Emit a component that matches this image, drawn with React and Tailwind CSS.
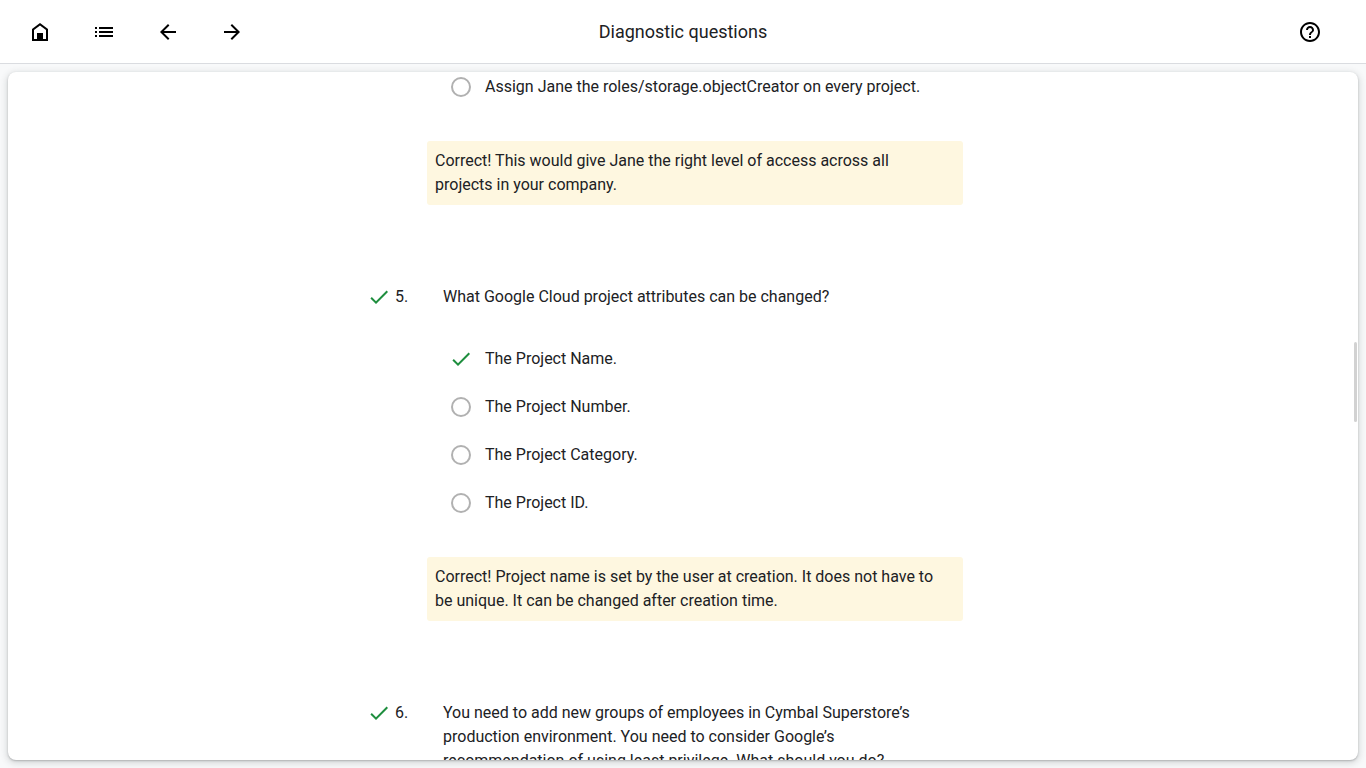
import { useId } from 'react';

const PATHS = {
  home: 'M4 21V9l8-6 8 6v12H4zM6 10v9h3v-6h6v6h3v-9l-6-4.5L6 10zM9 13h6v6H9z',
  list: 'M3 13h2v-2H3v2zm0 4h2v-2H3v2zm0-8h2V7H3v2zm4 4h14v-2H7v2zm0 4h14v-2H7v2zM7 7v2h14V7H7z',
  back: 'M20 11H7.83l5.59-5.59L12 4l-8 8 8 8 1.41-1.41L7.83 13H20v-2z',
  forward: 'M12 4l-1.41 1.41L16.17 11H4v2h12.17l-5.58 5.59L12 20l8-8-8-8z',
  help: 'M11 18h2v-2h-2v2zm1-16C6.48 2 2 6.48 2 12s4.48 10 10 10 10-4.48 10-10S17.52 2 12 2zm0 18c-4.41 0-8-3.59-8-8s3.59-8 8-8 8 3.59 8 8-3.59 8-8 8zm0-14c-2.21 0-4 1.79-4 4h2c0-1.1.9-2 2-2s2 .9 2 2c0 2-3 1.75-3 5h2c0-2.25 3-2.5 3-5 0-2.21-1.79-4-4-4z',
  check: 'M9 16.17L4.83 12l-1.42 1.41L9 19 21 7l-1.41-1.41z',
};

function Icon({ name, className = '' }) {
  return (
    <svg viewBox="0 0 24 24" fill="currentColor" aria-hidden="true" className={`size-6 shrink-0 ${className}`}>
      {name === 'home' ? (
        <>
          <path d="M4 21V9l8-6 8 6v12H4zM6 10v9h12v-9l-6-4.5L6 10z" fillRule="evenodd" />
          <path d="M9 13h6v6H9z" />
        </>
      ) : (
        <path d={PATHS[name]} />
      )}
    </svg>
  );
}

function IconButton({ icon, label }) {
  return (
    <button type="button" aria-label={label} className="flex size-12 items-center justify-center rounded-full text-black hover:bg-gray-100">
      <Icon name={icon} />
    </button>
  );
}

function Option({ name, children, correct = false }) {
  const id = useId();
  return (
    <div className="flex items-center">
      <span className="mr-3 flex size-6 items-center justify-center">
        <input
          id={id}
          type="radio"
          name={name}
          defaultChecked={correct}
          className={correct ? 'sr-only' : 'size-5 appearance-none rounded-full border-2 border-[#b1b1b1]'}
        />
        {correct && <Icon name="check" className="text-[#1e8e3e]" />}
      </span>
      <label htmlFor={id}>{children}</label>
    </div>
  );
}

function Options({ label, children }) {
  return (
    <div role="radiogroup" aria-label={label} className="ml-[86px] flex flex-col gap-6">
      {children}
    </div>
  );
}

function Feedback({ children }) {
  return <p className="mt-[42px] ml-16 rounded-[3px] bg-[#fef7e0] py-2 pr-5 pl-2">{children}</p>;
}

function Question({ number, children }) {
  return (
    <div className="mt-20 flex items-start gap-1 pl-1">
      <Icon name="check" className="text-[#1e8e3e]" />
      <span className="w-11 shrink-0">{number}.</span>
      <h2 className="pr-4">{children}</h2>
    </div>
  );
}

export default function App() {
  return (
    <div className="flex h-screen flex-col bg-[#f8f9fa] font-['Roboto',sans-serif] text-base text-[#202124]">
      <header className="grid h-16 shrink-0 grid-cols-[1fr_auto_1fr] items-center border-b border-[#dadce0] bg-white px-4">
        <nav className="flex gap-4">
          <IconButton icon="home" label="Home" />
          <IconButton icon="list" label="Contents" />
          <IconButton icon="back" label="Previous" />
          <IconButton icon="forward" label="Next" />
        </nav>
        <h1 className="font-['Google_Sans','Product_Sans','Roboto',sans-serif] text-lg">Diagnostic questions</h1>
        <div className="flex justify-end pr-4">
          <IconButton icon="help" label="Help" />
        </div>
      </header>
      <main className="relative m-2 min-h-0 flex-1 overflow-hidden rounded-lg bg-white shadow-[0_1px_2px_rgba(60,64,67,0.3),0_2px_6px_2px_rgba(60,64,67,0.15)]">
        <div className="h-full overflow-y-auto [scrollbar-width:none]">
          <div className="mx-auto max-w-[640px] pt-[3px] pr-10">
            <Options label="Question 4">
              <Option name="q4">Assign Jane the roles/storage.objectCreator on every project.</Option>
            </Options>
            <Feedback>Correct! This would give Jane the right level of access across all projects in your company.</Feedback>

            <Question number={5}>What Google Cloud project attributes can be changed?</Question>
            <div className="mt-[38px]">
              <Options label="What Google Cloud project attributes can be changed?">
                <Option name="q5" correct>The Project Name.</Option>
                <Option name="q5">The Project Number.</Option>
                <Option name="q5">The Project Category.</Option>
                <Option name="q5">The Project ID.</Option>
              </Options>
            </div>
            <Feedback>
              Correct! Project name is set by the user at creation. It does not have to be unique. It can be changed after creation time.
            </Feedback>

            <Question number={6}>
              You need to add new groups of employees in Cymbal Superstore’s production environment. You need to consider Google’s
              recommendation of using least privilege. What should you do?
            </Question>
          </div>
        </div>
        <div aria-hidden="true" className="absolute top-[270px] right-px h-20 w-[3px] rounded-full bg-[#d2d2d2]" />
      </main>
    </div>
  );
}
